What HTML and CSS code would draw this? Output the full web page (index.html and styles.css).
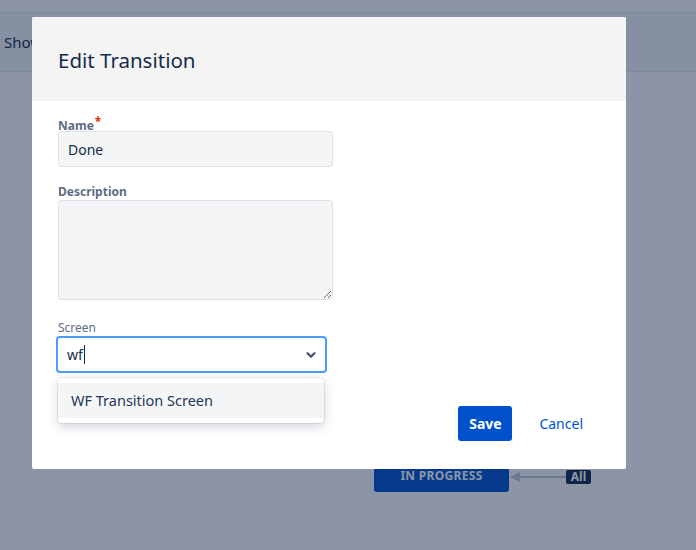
FILE: index.html
```html
<!DOCTYPE html>
<html lang="en">
  <head>
    <meta charset="UTF-8" />
    <meta name="viewport" content="width=device-width, initial-scale=1.0" />
    <title>Edit Transition</title>
    <link rel="stylesheet" href="styles.css">
  </head>
  <body>
    <div class="page">
      <div class="topbar"></div>
      <div class="toolbar">Show</div>

      <div class="canvas">
        <div class="node">IN PROGRESS</div>
        <svg class="arrow" width="56" height="12" viewBox="0 0 56 12">
          <line x1="8" y1="6" x2="56" y2="6" stroke="#c1c7d0" stroke-width="2" />
          <path d="M0 6 L10 1 L10 11 Z" fill="#c1c7d0" />
        </svg>
        <div class="badge">All</div>
      </div>

      <div class="blanket"></div>

      <div class="modal">
        <div class="modal-header">
          <h1>Edit Transition</h1>
        </div>

        <form class="modal-body">
          <div class="form-group">
            <label for="name">Name<span class="required">*</span></label>
            <input type="text" id="name" value="Done" />
          </div>

          <div class="form-group">
            <label for="description">Description</label>
            <textarea id="description"></textarea>
          </div>

          <div class="form-group">
            <label class="light">Screen</label>
            <div class="select">
              <span class="select-value">wf</span><span class="caret"></span>
              <svg class="chevron" width="12" height="12" viewBox="0 0 12 12">
                <path d="M2.5 4.2 L6 7.6 L9.5 4.2" fill="none" stroke="#42526e" stroke-width="2.2" stroke-linecap="round" stroke-linejoin="round" />
              </svg>
            </div>
            <div class="menu">
              <div class="option">WF Transition Screen</div>
            </div>
          </div>

          <div class="modal-footer">
            <button type="submit" class="btn-primary">Save</button>
            <button type="button" class="btn-link">Cancel</button>
          </div>
        </form>
      </div>
    </div>
  </body>
</html>
```

FILE: styles.css
```css
* {
  margin: 0;
  padding: 0;
  box-sizing: border-box;
  font-family: "Noto Sans", "Open Sans", sans-serif;
}

body {
  background-color: #ffffff;
  color: #172b4d;
}

.page {
  position: relative;
  width: 696px;
  height: 550px;
  overflow: hidden;
  display: flex;
  flex-direction: column;
}

.topbar {
  height: 13px;
  border-bottom: 1px solid #e6e8ec;
}

.toolbar {
  height: 59px;
  background-color: #f4f5f7;
  border-bottom: 1px solid #e6e8ec;
  display: flex;
  align-items: center;
  padding-left: 4px;
  font-size: 15px;
  color: #172b4d;
}

.canvas {
  flex: 1;
  position: relative;
}

.node {
  position: absolute;
  left: 374px;
  top: 388px;
  width: 135px;
  height: 32px;
  padding-top: 9px;
  background-color: #0052cc;
  border-radius: 3px;
  color: #ffffff;
  font-size: 12px;
  font-weight: 700;
  letter-spacing: 0.3px;
  text-align: center;
  line-height: 14px;
}

.arrow {
  position: absolute;
  left: 510px;
  top: 399px;
}

.badge {
  position: absolute;
  left: 566px;
  top: 398px;
  width: 25px;
  height: 14px;
  background-color: #172b4d;
  border-radius: 2px;
  color: #ffffff;
  font-size: 12px;
  font-weight: 700;
  line-height: 14px;
  text-align: center;
}

.blanket {
  position: absolute;
  inset: 0;
  background-color: rgba(9, 30, 66, 0.47);
}

.modal {
  position: absolute;
  left: 32px;
  top: 17px;
  width: 594px;
  height: 452px;
  background-color: #ffffff;
  border-radius: 2px;
  display: flex;
  flex-direction: column;
}

.modal-header {
  height: 84px;
  background-color: #f4f4f4;
  border-radius: 2px 2px 0 0;
  padding: 2px 26px 0;
  display: flex;
  align-items: center;
}

h1 {
  font-size: 20.5px;
  font-weight: 400;
  color: #172b4d;
}

.modal-body {
  flex: 1;
  display: flex;
  flex-direction: column;
  padding: 13px 26px 28px;
}

.form-group {
  position: relative;
  margin-bottom: 17px;
}

.form-group:nth-child(2) {
  margin-bottom: 20px;
}

label {
  display: block;
  height: 16px;
  margin-bottom: 1px;
  font-size: 12px;
  font-weight: 700;
  line-height: 16px;
  color: #5e6c84;
}

label.light {
  font-weight: 400;
  margin-bottom: 0;
}

.required {
  color: #de350b;
  font-size: 12px;
  vertical-align: 4px;
  margin-left: 1px;
}

input,
textarea {
  display: block;
  width: 275px;
  border: 1px solid #dfe1e6;
  border-radius: 3px;
  background-color: #f4f5f7;
  color: #172b4d;
  font-size: 14px;
}

input {
  height: 36px;
  padding: 0 9px;
}

textarea {
  height: 100px;
  margin-top: -1px;
  resize: vertical;
}

input:focus,
textarea:focus {
  outline: none;
}

.select {
  position: relative;
  width: 271px;
  height: 37px;
  margin-left: -2px;
  border: 2px solid #4c9aff;
  border-radius: 4px;
  background-color: #ffffff;
  display: flex;
  align-items: center;
  padding-left: 9px;
  font-size: 14px;
  color: #172b4d;
}

.caret {
  display: inline-block;
  width: 1px;
  height: 19px;
  margin-left: 1px;
  background-color: #172b4d;
}

.chevron {
  position: absolute;
  right: 8px;
  top: 11px;
}

.menu {
  position: absolute;
  top: 58px;
  left: 0;
  width: 266px;
  height: 45px;
  padding-top: 5px;
  background-color: #ffffff;
  border-radius: 4px;
  box-shadow: 0 0 0 1px rgba(9, 30, 66, 0.08), 0 4px 11px rgba(9, 30, 66, 0.18);
  z-index: 10;
}

.option {
  height: 35px;
  padding-left: 13px;
  background-color: #f4f5f7;
  font-size: 14.5px;
  line-height: 35px;
  color: #253858;
}

.modal-footer {
  margin-top: auto;
  display: flex;
  justify-content: flex-end;
  gap: 17px;
  padding-right: 7px;
}

.btn-primary,
.btn-link {
  height: 35px;
  border: none;
  border-radius: 3px;
  font-size: 14px;
  cursor: pointer;
}

.btn-primary {
  width: 54px;
  background-color: #0052cc;
  color: #ffffff;
  font-weight: 700;
}

.btn-link {
  padding: 0 10px;
  background: none;
  color: #0052cc;
}
```
